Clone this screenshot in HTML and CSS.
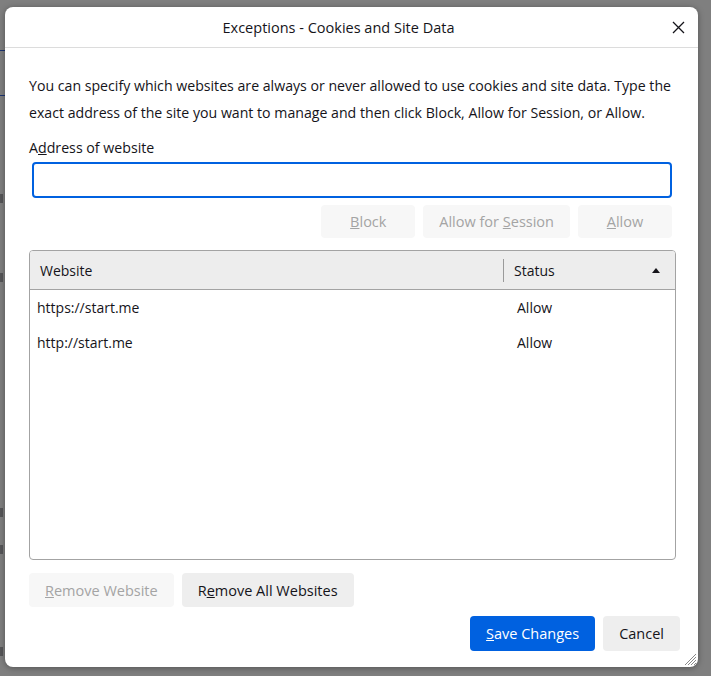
FILE: index.html
```html
<!DOCTYPE html>
<html>
<head>
<meta charset="utf-8">
<link rel="stylesheet" href="styles.css">
</head>
<body>
<div class="page">
  <div class="mark link-line f1"></div>
  <div class="mark link-line f2"></div>
  <div class="mark f3"></div>
  <div class="mark f4"></div>
  <div class="mark f5"></div>
  <div class="mark f6"></div>
  <div class="mark f7"></div>
</div>
<div class="dialog">
  <div class="titlebar">
    <div class="title">Exceptions - Cookies and Site Data</div>
    <div class="close">
      <svg width="13" height="13" viewBox="0 0 13 13"><path d="M1 1 L12 12 M12 1 L1 12" stroke="#15141a" stroke-width="1.3" fill="none"/></svg>
    </div>
  </div>
  <div class="content">
    <p class="intro">You can specify which websites are always or never allowed to use cookies and site data. Type the<br>exact address of the site you want to manage and then click Block, Allow for Session, or Allow.</p>
    <div class="lbl">A<u>d</u>dress of website</div>
    <div class="input"></div>
    <div class="btnrow">
      <div class="btn wide disabled"><span><u>B</u>lock</span></div>
      <div class="btn disabled"><span>Allow for <u>S</u>ession</span></div>
      <div class="btn wide disabled"><span><u>A</u>llow</span></div>
    </div>
    <div class="tree">
      <div class="thead">
        <div class="c1">Website</div>
        <div class="c2"><span class="sep"></span><span class="hlabel">Status</span><span class="arrow"></span></div>
      </div>
      <div class="trow">
        <div class="c1">https://start.me</div>
        <div class="c2">Allow</div>
      </div>
      <div class="trow">
        <div class="c1">http://start.me</div>
        <div class="c2">Allow</div>
      </div>
    </div>
    <div class="btnrow2">
      <div class="btn disabled"><span><u>R</u>emove Website</span></div>
      <div class="btn"><span>R<u>e</u>move All Websites</span></div>
    </div>
    <div class="footer">
      <div class="btn primary"><span><u>S</u>ave Changes</span></div>
      <div class="btn"><span>Cancel</span></div>
    </div>
  </div>
  <svg class="grip" width="13" height="13" viewBox="0 0 13 13">
    <path d="M12 1 L1 12 M12 4 L4 12 M12 7 L7 12 M12 10 L10 12" stroke="#8a8a8a" stroke-width="1" fill="none"/>
  </svg>
</div>
</body>
</html>
```
FILE: styles.css
```css
html, body {
  margin: 0;
  padding: 0;
}
body {
  width: 711px;
  height: 676px;
  overflow: hidden;
  position: relative;
  background: #7f7f7f;
  font-family: "Open Sans", "Noto Sans", sans-serif;
  font-size: 14.5px;
  color: #15141a;
}

/* faint marks of the page behind the dialog, peeking out on the left */
.page {
  display: flex;
  flex-direction: column;
  width: 5px;
}
.mark {
  width: 3px;
  height: 9px;
  background: #3a3a3e;
  opacity: 0.6;
}
.link-line {
  width: 5px;
  height: 1px;
  background: #1d3572;
  opacity: 1;
}
.f1 { margin-top: 50px; }
.f2 { margin-top: 44px; }
.f3 { margin-top: 98px; }
.f4 { margin-top: 70px; }
.f5 { margin-top: 226px; }
.f6 { margin-top: 28px; }
.f7 { margin-top: 93px; }

.dialog {
  position: absolute;
  left: 5px;
  top: 7px;
  width: 693px;
  height: 660px;
  background: #fff;
  border-radius: 8px;
  box-shadow: 0 1px 6px rgba(0, 0, 0, 0.35);
  display: flex;
  flex-direction: column;
  overflow: hidden;
}

.titlebar {
  flex: none;
  height: 40px;
  border-bottom: 1px solid #dcdcdc;
  display: flex;
  align-items: center;
}
.title {
  flex: 1;
  text-align: center;
  font-size: 14.5px;
}
.close {
  width: 13px;
  height: 13px;
  margin-right: 13px;
  display: flex;
}

.content {
  flex: 1;
  display: flex;
  flex-direction: column;
  padding: 24px 22px 0 24px;
}

.intro {
  margin: 0;
  font-size: 14.15px;
  line-height: 27px;
  white-space: nowrap;
}
.lbl {
  margin-top: 12px;
  font-size: 14.2px;
  line-height: 20px;
}
.input {
  margin: 4px 4px 0 3px;
  height: 36px;
  box-sizing: border-box;
  border: 2px solid #0061e0;
  border-radius: 4px;
}

.btn {
  height: 100%;
  display: flex;
  align-items: center;
  justify-content: center;
  padding: 0 16px;
  box-sizing: border-box;
  border-radius: 4px;
  background: #eeeeee;
  color: #15141a;
  white-space: nowrap;
}
.btn.wide {
  min-width: 94px;
}
.btn.disabled {
  background: #f7f7f7;
  color: #a4a4a4;
}
.btn.primary {
  background: #0061e0;
  color: #fff;
}

.btnrow {
  margin: 7px 4px 0 0;
  height: 33px;
  display: flex;
  justify-content: flex-end;
  gap: 8px;
}

.tree {
  margin-top: 12px;
  height: 310px;
  box-sizing: border-box;
  border: 1px solid #a3a3a3;
  border-radius: 4px;
  overflow: hidden;
  font-size: 14px;
}
.thead {
  height: 38px;
  background: #ededed;
  border-bottom: 1px solid #a3a3a3;
  display: flex;
  align-items: center;
}
.thead .c1 {
  width: 473px;
  box-sizing: border-box;
  padding-left: 10px;
}
.thead .c2 {
  flex: 1;
  display: flex;
  align-items: center;
}
.sep {
  width: 1px;
  height: 23px;
  background: #9a9a9a;
}
.hlabel {
  flex: 1;
  padding-left: 10px;
}
.arrow {
  width: 0;
  height: 0;
  border-left: 4px solid transparent;
  border-right: 4px solid transparent;
  border-bottom: 5px solid #15141a;
  margin-right: 15px;
}
.trow {
  height: 35px;
  display: flex;
  align-items: center;
}
.trow .c1 {
  width: 473px;
  box-sizing: border-box;
  padding-left: 7px;
}
.trow .c2 {
  padding-left: 14px;
}

.btnrow2 {
  margin-top: 13px;
  height: 34px;
  display: flex;
  gap: 8px;
}

.footer {
  margin: 9px -4px 0 0;
  height: 35px;
  display: flex;
  justify-content: flex-end;
  gap: 8px;
}

.grip {
  position: absolute;
  right: 1px;
  bottom: 1px;
}
```
